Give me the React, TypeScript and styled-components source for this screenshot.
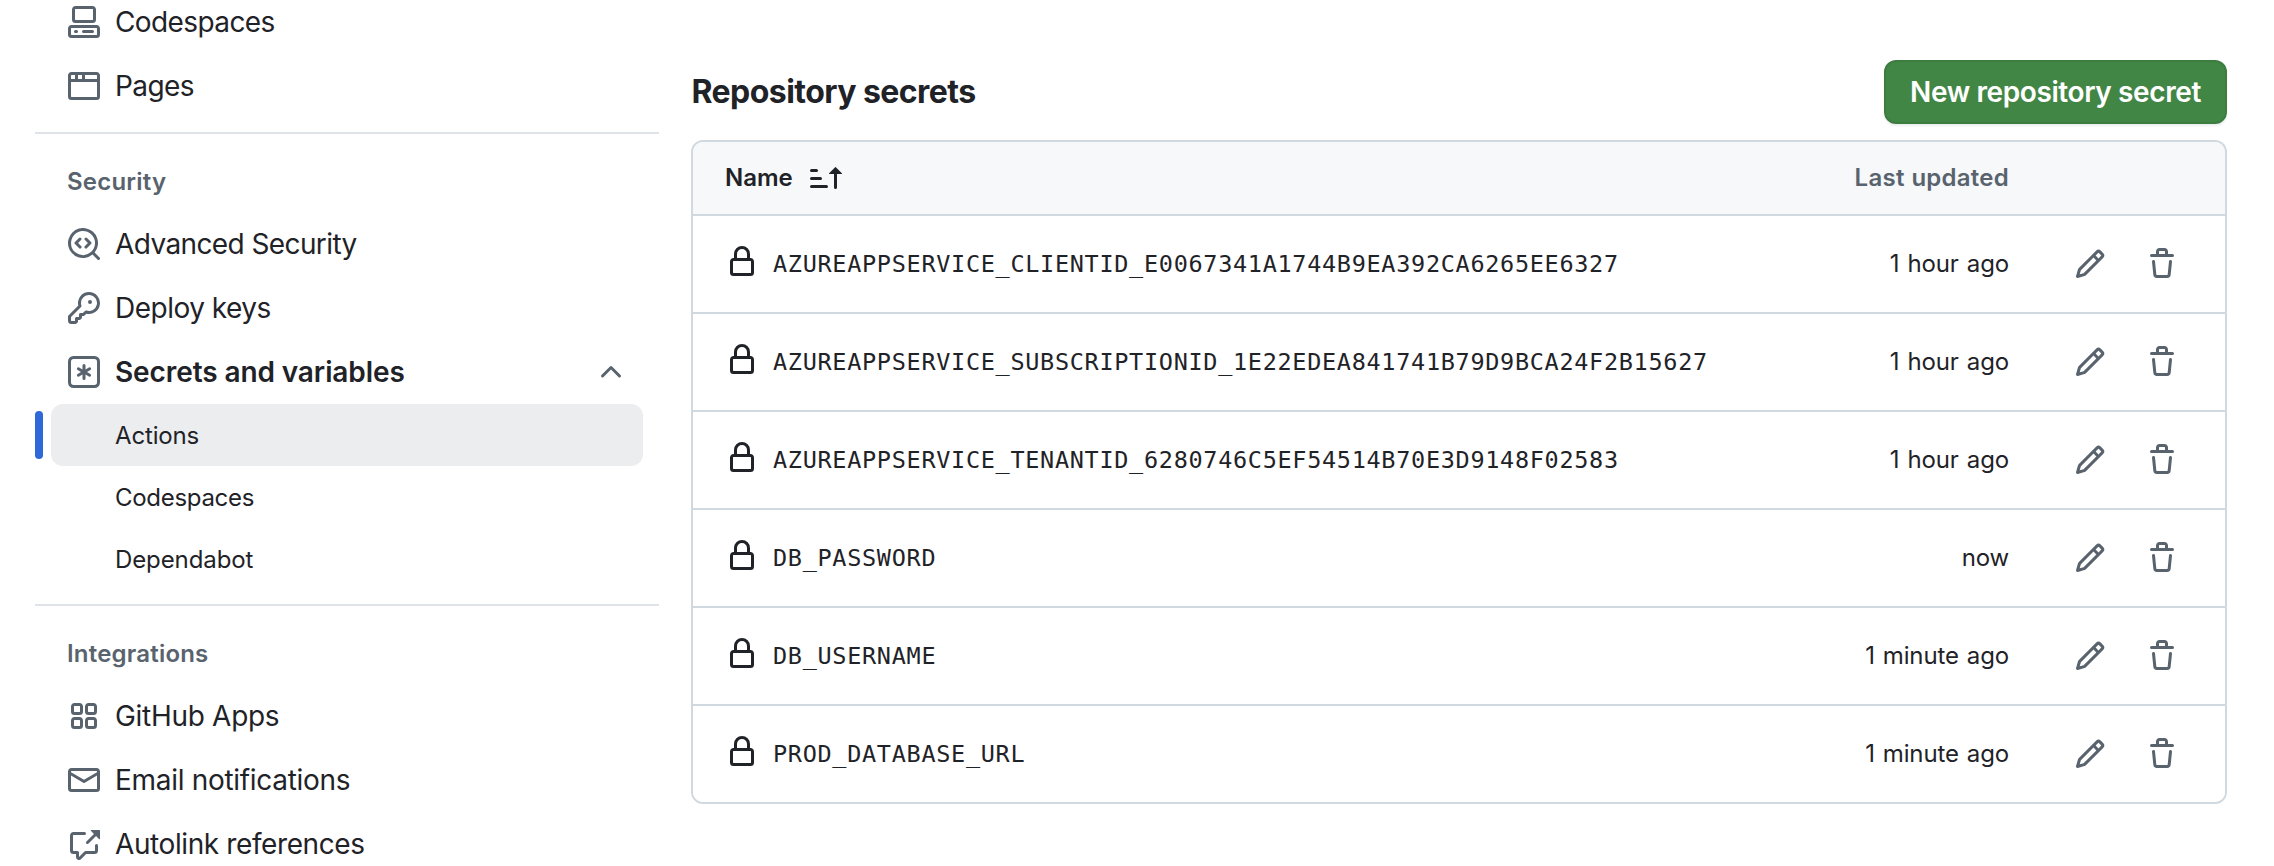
import React from "react";
import styled, { createGlobalStyle, css } from "styled-components";

const GlobalStyle = createGlobalStyle`
  *, *::before, *::after { box-sizing: border-box; }
  html, body { margin: 0; padding: 0; height: 866px; overflow: hidden; background: #fff; }
  body { font-family: Inter, "Liberation Sans", sans-serif; color: #1f2328; }
`;

const paths = {
  codespaces:
    "M0 11.25c0-.966.784-1.75 1.75-1.75h12.5c.966 0 1.75.784 1.75 1.75v3A1.75 1.75 0 0 1 14.25 16H1.75A1.75 1.75 0 0 1 0 14.25Zm2-9.5C2 .784 2.784 0 3.75 0h8.5C13.216 0 14 .784 14 1.75v5a1.75 1.75 0 0 1-1.75 1.75h-8.5A1.75 1.75 0 0 1 2 6.75Zm1.75-.25a.25.25 0 0 0-.25.25v5c0 .138.112.25.25.25h8.5a.25.25 0 0 0 .25-.25v-5a.25.25 0 0 0-.25-.25Zm-2 9.5a.25.25 0 0 0-.25.25v3c0 .138.112.25.25.25h12.5a.25.25 0 0 0 .25-.25v-3a.25.25 0 0 0-.25-.25ZM7 12.75a.75.75 0 0 1 .75-.75h4.5a.75.75 0 0 1 0 1.5h-4.5a.75.75 0 0 1-.75-.75Zm-4 0a.75.75 0 0 1 .75-.75h.5a.75.75 0 0 1 0 1.5h-.5a.75.75 0 0 1-.75-.75Z",
  browser:
    "M0 2.75C0 1.784.784 1 1.75 1h12.5c.966 0 1.75.784 1.75 1.75v10.5A1.75 1.75 0 0 1 14.25 15H1.75A1.75 1.75 0 0 1 0 13.25ZM14.5 6h-13v7.25c0 .138.112.25.25.25h12.5a.25.25 0 0 0 .25-.25Zm-6-3.5v2h6V2.75a.25.25 0 0 0-.25-.25ZM5 2.5v2h2v-2Zm-3.25 0a.25.25 0 0 0-.25.25V4.5h2v-2Z",
  codescan:
    "M8.47 4.97a.75.75 0 0 0 0 1.06L9.94 7.5 8.47 8.97a.75.75 0 1 0 1.06 1.06l2-2a.75.75 0 0 0 0-1.06l-2-2a.75.75 0 0 0-1.06 0ZM6.53 6.03a.75.75 0 0 0-1.06-1.06l-2 2a.75.75 0 0 0 0 1.06l2 2a.75.75 0 1 0 1.06-1.06L5.06 7.5l1.47-1.47ZM12.246 13.307a7.501 7.501 0 1 1 1.06-1.06l2.474 2.473a.749.749 0 1 1-1.06 1.06l-2.474-2.473ZM1.5 7.5a6.002 6.002 0 0 0 3.608 5.504 6.002 6.002 0 0 0 6.486-1.117.748.748 0 0 1 .292-.293A6 6 0 1 0 1.5 7.5Z",
  key: "M10.5 0a5.499 5.499 0 1 1-1.288 10.848l-.932.932a.749.749 0 0 1-.53.22H7v.75a.749.749 0 0 1-.22.53l-.5.5a.749.749 0 0 1-.53.22H5v.75a.749.749 0 0 1-.22.53l-.5.5a.749.749 0 0 1-.53.22h-2A1.75 1.75 0 0 1 0 14.25v-2c0-.199.079-.389.22-.53l4.932-4.932A5.5 5.5 0 0 1 10.5 0Zm-4 5.5c-.001.431.069.86.205 1.269a.75.75 0 0 1-.181.768L1.5 12.56v1.69c0 .138.112.25.25.25h1.69l.06-.06v-1.19a.75.75 0 0 1 .75-.75h1.19l.06-.06v-1.19a.75.75 0 0 1 .75-.75h1.19l1.023-1.025a.75.75 0 0 1 .768-.18A4 4 0 1 0 6.5 5.5ZM11 6a1 1 0 1 1 0-2 1 1 0 0 1 0 2Z",
  keyAsterisk:
    "M0 2.75A2.75 2.75 0 0 1 2.75 0h10.5A2.75 2.75 0 0 1 16 2.75v10.5A2.75 2.75 0 0 1 13.25 16H2.75A2.75 2.75 0 0 1 0 13.25ZM2.75 1.5c-.69 0-1.25.56-1.25 1.25v10.5c0 .69.56 1.25 1.25 1.25h10.5c.69 0 1.25-.56 1.25-1.25V2.75c0-.69-.56-1.25-1.25-1.25ZM8 4a.75.75 0 0 1 .75.75V6.7l1.69-.975a.75.75 0 0 1 .75 1.3L9.5 8l1.69.976a.75.75 0 0 1-.75 1.298L8.75 9.3v1.951a.75.75 0 0 1-1.5 0V9.299l-1.69.976a.75.75 0 0 1-.75-1.3L6.5 8l-1.69-.975a.75.75 0 0 1 .75-1.3l1.69.976V4.75A.75.75 0 0 1 8 4Z",
  chevronUp:
    "M3.22 10.53a.749.749 0 0 1 0-1.06l4.25-4.25a.749.749 0 0 1 1.06 0l4.25 4.25a.749.749 0 1 1-1.06 1.06L8 6.811 4.28 10.53a.749.749 0 0 1-1.06 0Z",
  apps: "M1.5 3.25c0-.966.784-1.75 1.75-1.75h2.5c.966 0 1.75.784 1.75 1.75v2.5A1.75 1.75 0 0 1 5.75 7.5h-2.5A1.75 1.75 0 0 1 1.5 5.75Zm7 0c0-.966.784-1.75 1.75-1.75h2.5c.966 0 1.75.784 1.75 1.75v2.5a1.75 1.75 0 0 1-1.75 1.75h-2.5A1.75 1.75 0 0 1 8.5 5.75Zm-7 7c0-.966.784-1.75 1.75-1.75h2.5c.966 0 1.75.784 1.75 1.75v2.5a1.75 1.75 0 0 1-1.75 1.75h-2.5a1.75 1.75 0 0 1-1.75-1.75Zm7 0c0-.966.784-1.75 1.75-1.75h2.5c.966 0 1.75.784 1.75 1.75v2.5a1.75 1.75 0 0 1-1.75 1.75h-2.5a1.75 1.75 0 0 1-1.75-1.75ZM3.25 3a.25.25 0 0 0-.25.25v2.5c0 .138.112.25.25.25h2.5A.25.25 0 0 0 6 5.75v-2.5A.25.25 0 0 0 5.75 3Zm7 0a.25.25 0 0 0-.25.25v2.5c0 .138.112.25.25.25h2.5a.25.25 0 0 0 .25-.25v-2.5a.25.25 0 0 0-.25-.25Zm-7 7a.25.25 0 0 0-.25.25v2.5c0 .138.112.25.25.25h2.5a.25.25 0 0 0 .25-.25v-2.5a.25.25 0 0 0-.25-.25Zm7 0a.25.25 0 0 0-.25.25v2.5c0 .138.112.25.25.25h2.5a.25.25 0 0 0 .25-.25v-2.5a.25.25 0 0 0-.25-.25Z",
  mail: "M1.75 2h12.5c.966 0 1.75.784 1.75 1.75v8.5A1.75 1.75 0 0 1 14.25 14H1.75A1.75 1.75 0 0 1 0 12.25v-8.5C0 2.784.784 2 1.75 2ZM1.5 12.251c0 .138.112.25.25.25h12.5a.25.25 0 0 0 .25-.25V5.809L8.38 9.397a.75.75 0 0 1-.76 0L1.5 5.809v6.442Zm13-8.181v-.32a.25.25 0 0 0-.25-.25H1.75a.25.25 0 0 0-.25.25v.32L8 7.88Z",
  crossReference:
    "M2.75 3.5a.25.25 0 0 0-.25.25v7.5c0 .138.112.25.25.25h2a.75.75 0 0 1 .75.75v2.19l2.72-2.72a.749.749 0 0 1 .53-.22h4.5a.25.25 0 0 0 .25-.25v-2.5a.75.75 0 0 1 1.5 0v2.5A1.75 1.75 0 0 1 13.25 13H9.06l-2.573 2.573A1.458 1.458 0 0 1 4 14.543V13H2.75A1.75 1.75 0 0 1 1 11.25v-7.5C1 2.784 1.784 2 2.75 2h5.5a.75.75 0 0 1 0 1.5ZM16 1.25v4.146a.25.25 0 0 1-.427.177L14.03 4.03l-3.75 3.75a.749.749 0 0 1-1.275-.326.749.749 0 0 1 .215-.734l3.75-3.75-1.543-1.543A.25.25 0 0 1 11.604 1h4.146a.25.25 0 0 1 .25.25Z",
  lock: "M4 4a4 4 0 0 1 8 0v2h.25c.966 0 1.75.784 1.75 1.75v5.5A1.75 1.75 0 0 1 12.25 15h-8.5A1.75 1.75 0 0 1 2 13.25v-5.5C2 6.784 2.784 6 3.75 6H4Zm8.25 3.5h-8.5a.25.25 0 0 0-.25.25v5.5c0 .138.112.25.25.25h8.5a.25.25 0 0 0 .25-.25v-5.5a.25.25 0 0 0-.25-.25ZM10.5 6V4a2.5 2.5 0 1 0-5 0v2Z",
  pencil:
    "M11.013 1.427a1.75 1.75 0 0 1 2.474 0l1.086 1.086a1.75 1.75 0 0 1 0 2.474l-8.61 8.61c-.21.21-.47.364-.756.445l-3.251.93a.75.75 0 0 1-.927-.928l.929-3.25c.081-.286.235-.547.445-.758l8.61-8.61Zm.176 4.823L9.75 4.81l-6.286 6.287a.253.253 0 0 0-.064.108l-.558 1.953 1.953-.558a.253.253 0 0 0 .108-.064Zm1.238-3.763a.25.25 0 0 0-.354 0L10.811 3.75l1.439 1.44 1.263-1.263a.25.25 0 0 0 0-.354Z",
  trash:
    "M11 1.75V3h2.25a.75.75 0 0 1 0 1.5H2.75a.75.75 0 0 1 0-1.5H5V1.75C5 .784 5.784 0 6.75 0h2.5C10.216 0 11 .784 11 1.75ZM4.496 6.675l.66 6.6a.25.25 0 0 0 .249.225h5.19a.25.25 0 0 0 .249-.225l.66-6.6a.75.75 0 0 1 1.492.149l-.66 6.6A1.748 1.748 0 0 1 10.595 15h-5.19a1.75 1.75 0 0 1-1.741-1.575l-.66-6.6a.75.75 0 1 1 1.492-.15ZM6.5 1.75V3h3V1.75a.25.25 0 0 0-.25-.25h-2.5a.25.25 0 0 0-.25.25Z",
  sortAsc:
    "m12.927 2.573 3 3A.25.25 0 0 1 15.75 6H13.5v6.75a.75.75 0 0 1-1.5 0V6H9.75a.25.25 0 0 1-.177-.427l3-3a.25.25 0 0 1 .354 0ZM0 12.25a.75.75 0 0 1 .75-.75h7.5a.75.75 0 0 1 0 1.5H.75a.75.75 0 0 1-.75-.75Zm0-4a.75.75 0 0 1 .75-.75h4.5a.75.75 0 0 1 0 1.5H.75a.75.75 0 0 1-.75-.75Zm0-4a.75.75 0 0 1 .75-.75h2.5a.75.75 0 0 1 0 1.5H.75a.75.75 0 0 1-.75-.75Z",
};

type IconName = keyof typeof paths;

const IconSvg = styled.svg`
  display: block;
  flex: none;
  width: 32px;
  height: 32px;
  fill: currentColor;
`;

const Icon = ({ name }: { name: IconName }) => (
  <IconSvg viewBox="0 0 16 16" aria-hidden="true">
    <path d={paths[name]} />
  </IconSvg>
);

const Page = styled.div`
  display: flex;
  align-items: flex-start;
  height: 866px;
  overflow: hidden;
`;

const Sidebar = styled.nav`
  flex: none;
  width: 624px;
  margin: -10px 32px 0 35px;
`;

const NavGroup = styled.section`
  & + & {
    margin-top: 14px;
    border-top: 2px solid #dfe3e8;
  }
`;

const GroupTitle = styled.h3`
  margin: 0;
  padding: 30px 32px 0;
  height: 78px;
  font-size: 24px;
  line-height: 36px;
  font-weight: 600;
  letter-spacing: 0.2px;
  color: #59636e;
`;

const NavItem = styled.a<{ $bold?: boolean }>`
  display: flex;
  align-items: center;
  gap: 15px;
  height: 64px;
  padding: 0 32px 0 33px;
  color: #59636e;
  font-weight: ${(p) => (p.$bold ? 600 : 400)};
`;

const NavLabel = styled.span<{ $tracking?: number }>`
  flex: 1;
  font-size: 28px;
  line-height: 40px;
  letter-spacing: ${(p) => p.$tracking ?? -0.4}px;
  color: #1f2328;
`;

const SubItem = styled.a<{ $active?: boolean; $tracking?: number }>`
  position: relative;
  display: flex;
  align-items: center;
  height: 62px;
  margin: 0 16px;
  padding-left: 64px;
  border-radius: 12px;
  font-size: 24px;
  letter-spacing: ${(p) => p.$tracking ?? 0}px;
  ${(p) =>
    p.$active &&
    css`
      background: #ecedef;
      &::before {
        content: "";
        position: absolute;
        left: -16px;
        top: 7px;
        width: 8px;
        height: 48px;
        border-radius: 4px;
        background: #2f68d8;
      }
    `}
`;

const Main = styled.main`
  flex: none;
  width: 1536px;
  padding-top: 60px;
`;

const Header = styled.header`
  display: flex;
  align-items: center;
  justify-content: space-between;
  height: 64px;
  margin-bottom: 16px;
`;

const Title = styled.h2`
  margin: 0;
  padding-left: 0.5px;
  font-size: 32px;
  line-height: 48px;
  font-weight: 650;
  letter-spacing: -0.55px;
`;

const PrimaryButton = styled.button`
  width: 343px;
  height: 64px;
  padding: 0;
  border: 2px solid #3d7d40;
  border-radius: 12px;
  background: #428646;
  box-shadow: 0 2px 2px rgba(31, 35, 40, 0.08);
  color: #fff;
  font-family: inherit;
  font-size: 28px;
  font-weight: 560;
  letter-spacing: -0.4px;
  white-space: nowrap;
`;

const Table = styled.div`
  border: 2px solid #d1d9e0;
  border-radius: 12px;
  overflow: hidden;
`;

const Row = styled.div<{ $head?: boolean }>`
  display: flex;
  align-items: center;
  height: ${(p) => (p.$head ? 72 : 96)}px;
  padding: 0 47px 0 33px;
  background: ${(p) => (p.$head ? "#f6f8fa" : "#fff")};
  font-size: 24px;

  & + & {
    height: 98px;
    border-top: 2px solid #d1d9e0;
  }
`;

const HeadName = styled.div`
  display: flex;
  align-items: center;
  gap: 17px;
  flex: 1;
  margin-left: -1px;
  padding-bottom: 1px;
  font-weight: 600;
`;

const NameCell = styled.div`
  display: flex;
  align-items: center;
  gap: 15px;
  flex: 1;
  ${IconSvg} {
    margin-bottom: 4px;
  }
`;

const SecretName = styled.code`
  font-family: "DejaVu Sans Mono", monospace;
  font-size: 23.5px;
  letter-spacing: 0.69px;
`;

const Updated = styled.div<{ $head?: boolean }>`
  padding-bottom: 1px;
  text-align: right;
  letter-spacing: -0.15px;
  word-spacing: 1.5px;
  ${(p) =>
    p.$head &&
    css`
      font-weight: 600;
      letter-spacing: 0.25px;
      word-spacing: 0.5px;
      color: #59636e;
    `}
`;

const Actions = styled.div`
  display: flex;
  justify-content: flex-end;
  gap: 40px;
  width: 169px;
  color: #59636e;
`;

const IconButton = styled.button`
  padding: 0;
  border: 0;
  background: none;
  color: inherit;
`;

const secrets = [
  ["AZUREAPPSERVICE_CLIENTID_E0067341A1744B9EA392CA6265EE6327", "1 hour ago"],
  ["AZUREAPPSERVICE_SUBSCRIPTIONID_1E22EDEA841741B79D9BCA24F2B15627", "1 hour ago"],
  ["AZUREAPPSERVICE_TENANTID_6280746C5EF54514B70E3D9148F02583", "1 hour ago"],
  ["DB_PASSWORD", "now"],
  ["DB_USERNAME", "1 minute ago"],
  ["PROD_DATABASE_URL", "1 minute ago"],
];

type ItemProps = { icon: IconName; label: string; tracking?: number };

const Item = ({ icon, label, tracking }: ItemProps) => (
  <NavItem>
    <Icon name={icon} />
    <NavLabel $tracking={tracking}>{label}</NavLabel>
  </NavItem>
);

export default function App() {
  return (
    <>
      <GlobalStyle />
      <Page>
        <Sidebar>
          <NavGroup>
            <Item icon="codespaces" label="Codespaces" tracking={-0.6} />
            <Item icon="browser" label="Pages" tracking={-0.6} />
          </NavGroup>
          <NavGroup>
            <GroupTitle>Security</GroupTitle>
            <Item icon="codescan" label="Advanced Security" tracking={-0.6} />
            <Item icon="key" label="Deploy keys" tracking={-0.5} />
            <NavItem $bold>
              <Icon name="keyAsterisk" />
              <NavLabel $tracking={-0.1}>Secrets and variables</NavLabel>
              <Icon name="chevronUp" />
            </NavItem>
            <SubItem $active $tracking={-0.15}>
              Actions
            </SubItem>
            <SubItem $tracking={-0.3}>Codespaces</SubItem>
            <SubItem $tracking={-0.1}>Dependabot</SubItem>
          </NavGroup>
          <NavGroup>
            <GroupTitle>Integrations</GroupTitle>
            <Item icon="apps" label="GitHub Apps" tracking={-0.3} />
            <Item icon="mail" label="Email notifications" tracking={-0.3} />
            <Item icon="crossReference" label="Autolink references" />
          </NavGroup>
        </Sidebar>
        <Main>
          <Header>
            <Title>Repository secrets</Title>
            <PrimaryButton>New repository secret</PrimaryButton>
          </Header>
          <Table>
            <Row $head>
              <HeadName>
                <span>Name</span>
                <Icon name="sortAsc" />
              </HeadName>
              <Updated $head>Last updated</Updated>
              <Actions />
            </Row>
            {secrets.map(([name, updated]) => (
              <Row key={name}>
                <NameCell>
                  <Icon name="lock" />
                  <SecretName>{name}</SecretName>
                </NameCell>
                <Updated>{updated}</Updated>
                <Actions>
                  <IconButton aria-label={`Edit ${name}`}>
                    <Icon name="pencil" />
                  </IconButton>
                  <IconButton aria-label={`Delete ${name}`}>
                    <Icon name="trash" />
                  </IconButton>
                </Actions>
              </Row>
            ))}
          </Table>
        </Main>
      </Page>
    </>
  );
}
